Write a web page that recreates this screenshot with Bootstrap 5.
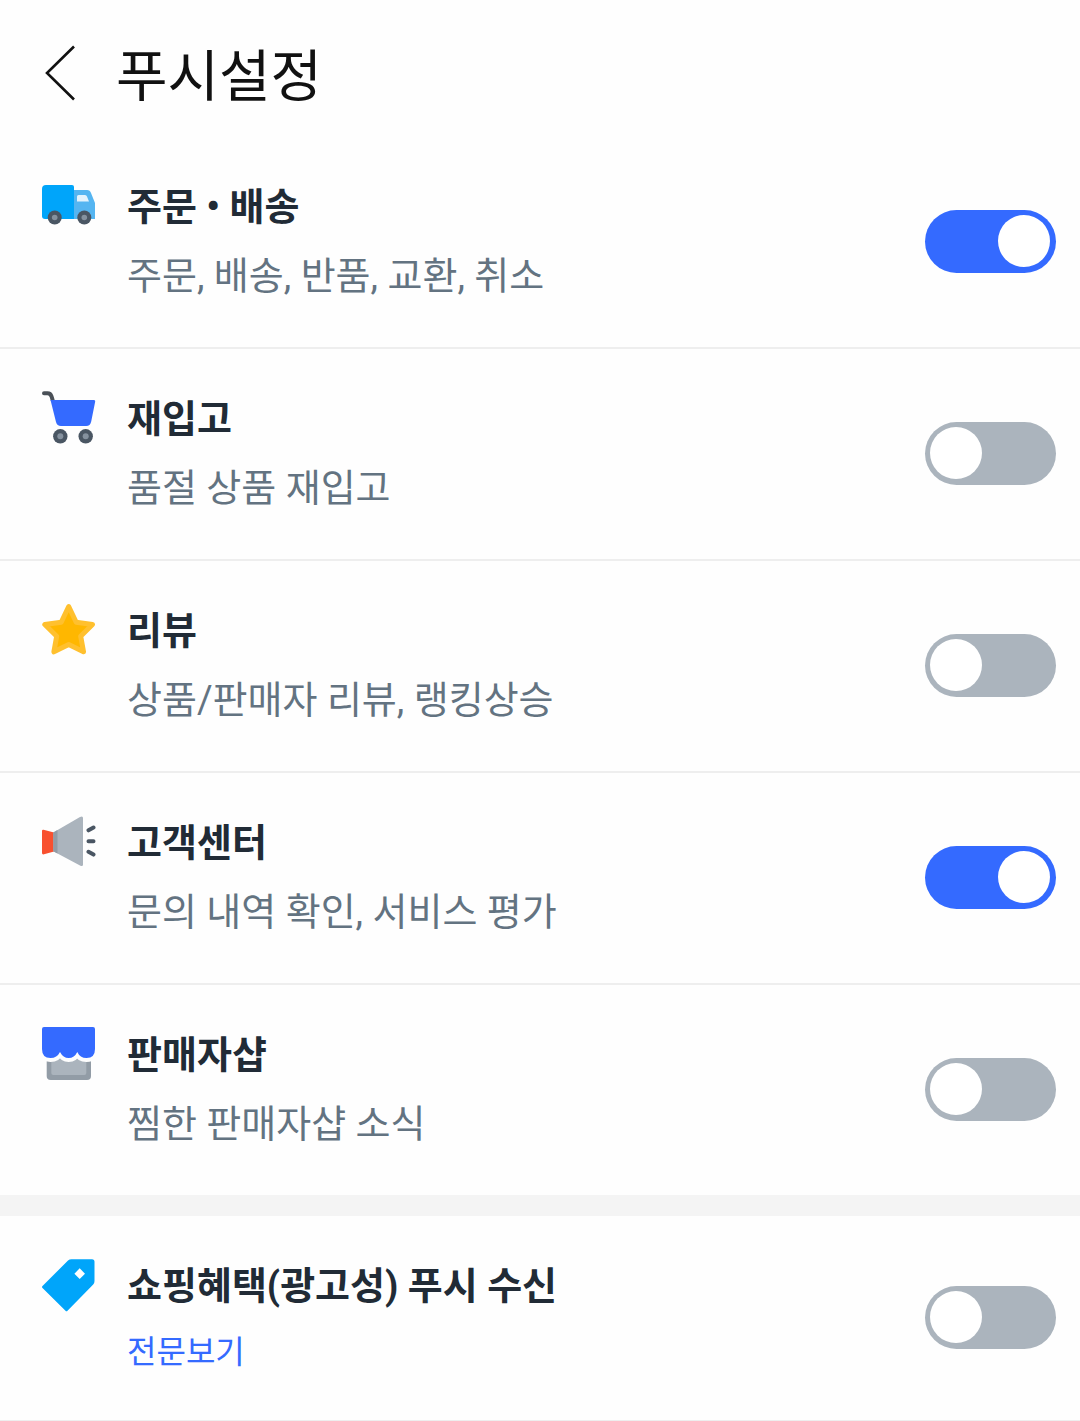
<!DOCTYPE html>
<html lang="ko">
<head>
<meta charset="utf-8">
<meta name="viewport" content="width=device-width, initial-scale=1">
<title>푸시설정</title>
<link rel="stylesheet" href="https://cdn.jsdelivr.net/npm/bootstrap@5.3.0/dist/css/bootstrap.min.css">
<style>
  body { font-family: Roboto, "Noto Sans CJK KR", sans-serif; background: #fefefe; color: #212b36; }
  .top-bar { padding: 29px 24px 20px 42px; }
  .back-btn { width: 36px; height: 56px; margin-right: 38px; }
  .page-title { font-size: 56px; line-height: 80px; font-weight: 400; color: #111; }
  .push-list { --bs-list-group-bg: transparent; --bs-list-group-border-color: #eee; }
  .push-row { padding: 41px 24px 43px 42px; border-bottom: 2px solid #eee; border-radius: 0; color: inherit; }
  .push-list .push-row { border-width: 0 0 2px; }
  .push-list .push-row:last-child { border-bottom: 0; }
  .push-icon { width: 54px; height: 56px; margin-right: 31px; }
  .push-name { font-size: 38px; line-height: 58px; font-weight: 700; }
  .push-note { font-size: 38px; line-height: 56px; margin-top: 12px; color: #637381; }
  .terms-link { font-size: 32px; line-height: 50px; margin-top: 12px; color: #346aff; }
  .section-gap { height: 21px; background: #f4f4f4; }
  .form-switch .push-toggle { width: 131px; height: 63px; margin: 0; padding: 0 6px 0 5px; border: 0; border-radius: 32px;
    background: #abb4bd; display: flex; align-items: center; cursor: pointer; }
  .push-toggle::before { content: ""; width: 52px; height: 52px; border-radius: 50%; background: #fff; }
  .form-switch .push-toggle:checked { background: #346aff; justify-content: flex-end; }
</style>
<script src="https://cdn.jsdelivr.net/npm/bootstrap@5.3.0/dist/js/bootstrap.bundle.min.js" defer></script>
</head>
<body>
<header class="top-bar d-flex align-items-center">
  <button type="button" class="back-btn btn p-0 border-0 d-flex align-items-center" aria-label="뒤로">
    <svg width="36" height="56" viewBox="0 0 36 56" fill="none" stroke="#111" stroke-width="2.6"><path d="M32 1.500 5 28 32 54.500"/></svg>
  </button>
  <h1 class="page-title m-0 pt-2">푸시설정</h1>
</header>

<main>
  <ul class="push-list list-group list-group-flush">
    <li class="push-row list-group-item d-flex align-items-center">
      <svg class="push-icon flex-shrink-0 align-self-start" viewBox="0 0 54 56" aria-hidden="true">
        <path fill="#55b5f1" d="M31 12h14q3 0 4 3l4 10v16H31z"/>
        <path fill="#e4f3fd" d="M35 23.500v-5q0-1.500 1.500-1.500H43q1.500 0 2 1.500l2 5z"/>
        <path fill="#00a5fa" d="M4 7h26q2 0 2 2v32H3q-3 0-3-3V11q0-4 4-4z"/>
        <g fill="#4a5663"><circle cx="12.700" cy="39.500" r="7"/><circle cx="42.300" cy="39.500" r="7"/></g>
        <g fill="#85919e"><circle cx="12.700" cy="39.500" r="2.800"/><circle cx="42.300" cy="39.500" r="2.800"/></g>
      </svg>
      <div class="flex-grow-1">
        <label class="push-name d-block" for="push-order">주문 • 배송</label>
        <p class="push-note mb-0">주문, 배송, 반품, 교환, 취소</p>
      </div>
      <div class="form-switch p-0 m-0 flex-shrink-0"><input class="push-toggle form-check-input float-none" type="checkbox" role="switch" id="push-order" checked></div>
    </li>
    <li class="push-row list-group-item d-flex align-items-center">
      <svg class="push-icon flex-shrink-0 align-self-start" viewBox="0 0 54 56" aria-hidden="true">
        <path d="M2 3.300h3.500q3 0 4 3l1.200 4" fill="none" stroke="#4a5057" stroke-width="4" stroke-linecap="round"/>
        <path fill="#346aff" d="M8.500 10H52q1.500 0 1.200 1.500l-4 20q-1 4.500-5 4.500H19q-4 0-5-4z"/>
        <g fill="#4a5663"><circle cx="18.300" cy="46.300" r="7.200"/><circle cx="43.700" cy="46.300" r="7.200"/></g>
        <g fill="#85919e"><circle cx="18.300" cy="46.300" r="3"/><circle cx="43.700" cy="46.300" r="3"/></g>
      </svg>
      <div class="flex-grow-1">
        <label class="push-name d-block" for="push-restock">재입고</label>
        <p class="push-note mb-0">품절 상품 재입고</p>
      </div>
      <div class="form-switch p-0 m-0 flex-shrink-0"><input class="push-toggle form-check-input float-none" type="checkbox" role="switch" id="push-restock"></div>
    </li>
    <li class="push-row list-group-item d-flex align-items-center">
      <svg class="push-icon flex-shrink-0 align-self-start" viewBox="0 0 54 56" aria-hidden="true">
        <path fill="#ffb700" stroke="#ffc02e" stroke-width="5" stroke-linejoin="round" d="m26.700 4.500 7.500 15.800 16.300 2.200-11.800 11.800 2.800 15.500-14.800-7.300-14.800 7.300 2.800-15.500L2.800 22.500l16.400-2.200z"/>
      </svg>
      <div class="flex-grow-1">
        <label class="push-name d-block" for="push-review">리뷰</label>
        <p class="push-note mb-0">상품/판매자 리뷰, 랭킹상승</p>
      </div>
      <div class="form-switch p-0 m-0 flex-shrink-0"><input class="push-toggle form-check-input float-none" type="checkbox" role="switch" id="push-review"></div>
    </li>
    <li class="push-row list-group-item d-flex align-items-center">
      <svg class="push-icon flex-shrink-0 align-self-start" viewBox="0 0 54 56" aria-hidden="true">
        <path fill="#f8502f" d="M0 17q0-1.500 1.500-1.200L12 18.500v19L2 40.300q-2 .5-2-1.300z"/>
        <path fill="#abb4bd" d="M11.300 18.500 38 3q3-1.500 3 1v46.500q0 2.500-3 1L11.300 37.300z"/>
        <path fill="#929ca6" d="m11.300 18.500 4.200-2.400v23.500l-4.200-2.300z"/>
        <path d="m46.500 16.300 5-2.800M46.500 27.300h5M46.500 37.800l5 2.800" stroke="#4a5663" stroke-width="4" stroke-linecap="round"/>
      </svg>
      <div class="flex-grow-1">
        <label class="push-name d-block" for="push-center">고객센터</label>
        <p class="push-note mb-0">문의 내역 확인, 서비스 평가</p>
      </div>
      <div class="form-switch p-0 m-0 flex-shrink-0"><input class="push-toggle form-check-input float-none" type="checkbox" role="switch" id="push-center" checked></div>
    </li>
    <li class="push-row list-group-item d-flex align-items-center">
      <svg class="push-icon flex-shrink-0 align-self-start" viewBox="0 0 54 56" aria-hidden="true">
        <path fill="#929ca6" d="M4.700 28H49v22q0 4-4 4H8.700q-4 0-4-4z"/>
        <path fill="#abb4bd" d="M9.300 28h35v19q0 2-2 2h-31q-2 0-2-2z"/>
        <path fill="#346aff" stroke="#fefefe" stroke-width="8" d="M2 1h49q2 0 2 2V23q0 9-8.500 9-6.500 0-9.200-6-3 6-8.600 6t-8.700-6q-3 6-9.500 6Q0 32 0 23V3q0-2 2-2z"/>
        <path fill="#346aff" d="M2 1h49q2 0 2 2V23q0 9-8.500 9-6.500 0-9.200-6-3 6-8.600 6t-8.700-6q-3 6-9.500 6Q0 32 0 23V3q0-2 2-2z"/>
      </svg>
      <div class="flex-grow-1">
        <label class="push-name d-block" for="push-shop">판매자샵</label>
        <p class="push-note mb-0">찜한 판매자샵 소식</p>
      </div>
      <div class="form-switch p-0 m-0 flex-shrink-0"><input class="push-toggle form-check-input float-none" type="checkbox" role="switch" id="push-shop"></div>
    </li>
  </ul>

  <div class="section-gap"></div>

  <section class="push-row d-flex align-items-center">
    <svg class="push-icon flex-shrink-0 align-self-start" viewBox="0 0 54 56" aria-hidden="true">
      <path fill="#00a5fa" fill-rule="evenodd" d="M26 3.500q1.500-1.300 3.500-1.300H50q2.500 0 2.500 2.500V24q0 2-1.300 3.500L25.500 53.800q-1 1-2 0L.5 31q-1-1 0-2zM37.700 11.300 32.400 16.700l5.300 5.300 5.300-5.300z"/>
    </svg>
    <div class="flex-grow-1">
      <label class="push-name d-block" for="push-benefit">쇼핑혜택(광고성) 푸시 수신</label>
      <a class="terms-link d-inline-block align-top text-decoration-none" href="#">전문보기</a>
    </div>
    <div class="form-switch p-0 m-0 flex-shrink-0"><input class="push-toggle form-check-input float-none" type="checkbox" role="switch" id="push-benefit"></div>
  </section>
</main>
</body>
</html>
